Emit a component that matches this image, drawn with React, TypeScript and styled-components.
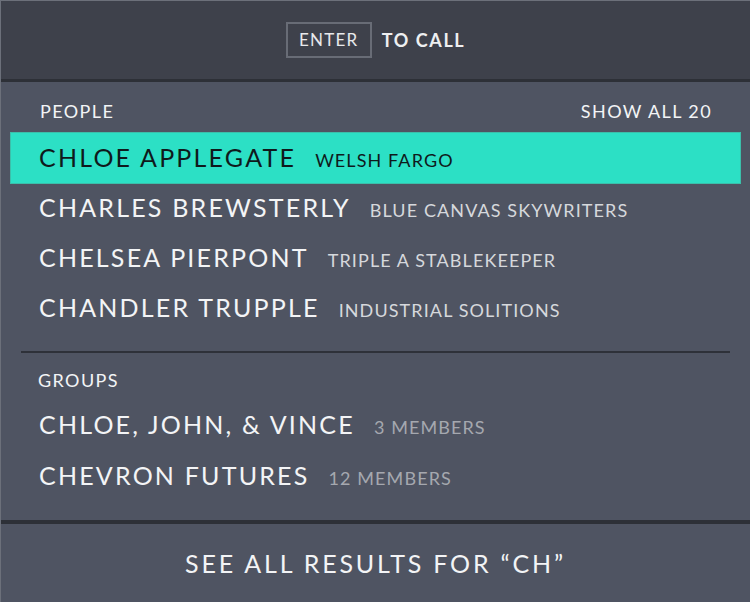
import { createGlobalStyle } from "styled-components";
import styled from "styled-components";

const GlobalStyle = createGlobalStyle`
  html, body {
    margin: 0;
    padding: 0;
    background: #4f5462;
  }
  * {
    box-sizing: border-box;
  }
`;

type Person = { name: string; company: string };
type Group = { name: string; members: number };

const people: Person[] = [
  { name: "CHLOE APPLEGATE", company: "WELSH FARGO" },
  { name: "CHARLES BREWSTERLY", company: "BLUE CANVAS SKYWRITERS" },
  { name: "CHELSEA PIERPONT", company: "TRIPLE A STABLEKEEPER" },
  { name: "CHANDLER TRUPPLE", company: "INDUSTRIAL SOLITIONS" },
];

const groups: Group[] = [
  { name: "CHLOE, JOHN, & VINCE", members: 3 },
  { name: "CHEVRON FUTURES", members: 12 },
];

const Panel = styled.div`
  width: 750px;
  height: 602px;
  display: flex;
  flex-direction: column;
  background: #4f5462;
  border-top: 1px solid #6c707a;
  border-left: 1px solid #6c707a;
  font-family: Lato, "Noto Sans", sans-serif;
  color: #f3f4f6;
  overflow: hidden;
`;

const Header = styled.header`
  height: 81px;
  flex-shrink: 0;
  display: flex;
  align-items: center;
  justify-content: center;
  gap: 10px;
  padding-bottom: 1px;
  background: #3e414b;
  border-bottom: 3px solid #2d3037;
`;

const KeyCap = styled.span`
  display: flex;
  align-items: center;
  justify-content: center;
  width: 86px;
  height: 36px;
  border: 2px solid #686c76;
  font-size: 17px;
  letter-spacing: 1.2px;
  color: #e8e9ec;
`;

const HeaderText = styled.span`
  font-size: 18px;
  font-weight: 700;
  letter-spacing: 1.6px;
  color: #eeeff1;
`;

const Body = styled.main`
  flex: 1;
  display: flex;
  flex-direction: column;
  padding: 12px 9px 0 9px;
`;

const SectionHead = styled.div<{ $top?: number }>`
  display: flex;
  justify-content: space-between;
  align-items: center;
  height: 34px;
  padding: 0 29px 0 ${({ $top }) => ($top ? 28 : 30)}px;
  margin-top: ${({ $top }) => $top ?? 0}px;
  margin-bottom: ${({ $top }) => ($top ? 0 : 4)}px;
  font-size: 18px;
  letter-spacing: 1.4px;
  color: #f3f4f6;
`;

const Row = styled.div<{ $active?: boolean; $group?: boolean }>`
  display: flex;
  align-items: baseline;
  gap: 19px;
  height: ${({ $active, $group }) => ($active ? 52 : $group ? 51 : 50)}px;
  padding: 0 28px;
  padding-top: ${({ $active, $group }) => ($active ? 9 : $group ? 11 : 7)}px;
  background: ${({ $active }) => ($active ? "#2ce0c5" : "transparent")};
  border: 1px solid ${({ $active }) => ($active ? "#3bbfaa" : "transparent")};
  color: ${({ $active }) => ($active ? "#0f1a1c" : "#f3f4f6")};
`;

const Name = styled.span`
  font-size: 25px;
  letter-spacing: 2.2px;
  white-space: nowrap;
`;

const Detail = styled.span<{ $active?: boolean; $dim?: boolean }>`
  font-size: 18px;
  letter-spacing: 1.1px;
  white-space: nowrap;
  color: ${({ $active, $dim }) => ($active ? "#0f1a1c" : $dim ? "#a5a8af" : "#d6d8dc")};
`;

const Divider = styled.hr`
  margin: 17px 11px 0 11px;
  border: none;
  height: 2px;
  background: #2e3139;
`;

const Footer = styled.footer`
  height: 82px;
  flex-shrink: 0;
  display: flex;
  align-items: center;
  justify-content: center;
  border-top: 4px solid #2d3037;
  font-size: 25px;
  letter-spacing: 2.8px;
  color: #f3f4f6;
`;

export default function App() {
  return (
    <>
      <GlobalStyle />
      <Panel>
        <Header>
          <KeyCap>ENTER</KeyCap>
          <HeaderText>TO CALL</HeaderText>
        </Header>
        <Body>
          <SectionHead>
            <span>PEOPLE</span>
            <span>SHOW ALL 20</span>
          </SectionHead>
          {people.map((p, i) => (
            <Row key={p.name} $active={i === 0}>
              <Name>{p.name}</Name>
              <Detail $active={i === 0}>{p.company}</Detail>
            </Row>
          ))}
          <Divider />
          <SectionHead $top={10}>
            <span>GROUPS</span>
          </SectionHead>
          {groups.map((g) => (
            <Row key={g.name} $group>
              <Name>{g.name}</Name>
              <Detail $dim>{g.members} MEMBERS</Detail>
            </Row>
          ))}
        </Body>
        <Footer>SEE ALL RESULTS FOR “CH”</Footer>
      </Panel>
    </>
  );
}
